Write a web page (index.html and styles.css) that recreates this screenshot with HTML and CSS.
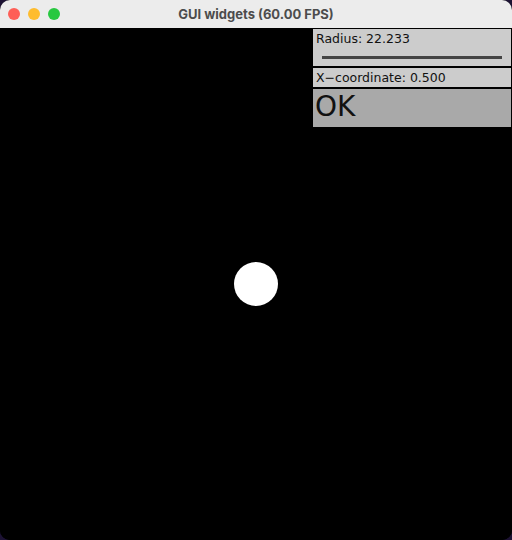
FILE: index.html
```html
<!DOCTYPE html>
<html>
<head>
<meta charset="utf-8">
<link rel="stylesheet" href="styles.css">
</head>
<body>
<div class="window">
  <div class="titlebar">
    <div class="lights">
      <span class="light red"></span>
      <span class="light yellow"></span>
      <span class="light green"></span>
    </div>
    <div class="title">GUI widgets (60.00 FPS)</div>
  </div>
  <div class="canvas">
    <div class="ball"></div>
    <div class="panel">
      <div class="box slider">
        <div class="label">Radius: 22.233</div>
        <div class="track"></div>
      </div>
      <div class="box">
        <div class="label">X−coordinate: 0.500</div>
      </div>
      <div class="box button">OK</div>
    </div>
  </div>
</div>
</body>
</html>
```
FILE: styles.css
```css
html, body {
  margin: 0;
  padding: 0;
  background: #1c1233;
}
.window {
  width: 512px;
  height: 540px;
  border-radius: 10px;
  overflow: hidden;
  display: flex;
  flex-direction: column;
  background: #000;
}
.titlebar {
  height: 28px;
  flex: none;
  background: #ececec;
  display: flex;
  align-items: center;
  position: relative;
  border-bottom: 0;
}
.lights {
  display: flex;
  gap: 8px;
  padding-left: 8px;
}
.light {
  width: 12px;
  height: 12px;
  border-radius: 50%;
  display: block;
}
.red { background: #fe5f57; }
.yellow { background: #febc2e; }
.green { background: #28c840; }
.title {
  position: absolute;
  left: 0;
  right: 0;
  text-align: center;
  font-family: "Inter", "Open Sans", sans-serif;
  font-weight: 700;
  font-size: 13px;
  color: #4c4c4c;
}
.canvas {
  flex: 1;
  position: relative;
  background: #000;
}
.ball {
  position: absolute;
  left: 234px;
  top: 234px;
  width: 44px;
  height: 44px;
  border-radius: 50%;
  background: #fff;
}
.panel {
  position: absolute;
  top: 1px;
  right: 1px;
  width: 198px;
  display: flex;
  flex-direction: column;
  gap: 2px;
}
.box {
  background: #cccccc;
  color: #111;
  font-family: "DejaVu Sans", sans-serif;
  font-size: 12.5px;
}
.label {
  padding: 1px 0 0 3px;
  height: 18px;
  line-height: 18px;
}
.slider {
  height: 37px;
}
.track {
  margin: 8px 9px 0 9px;
  height: 3px;
  background: #444;
}
.button {
  background: #a9a9a9;
  height: 38px;
  font-size: 28px;
  line-height: 36px;
  padding-left: 2px;
}
```
